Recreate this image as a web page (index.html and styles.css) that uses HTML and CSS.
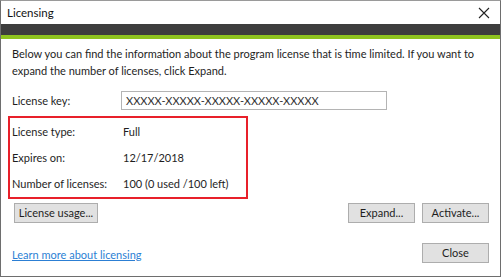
FILE: index.html
```html
<!DOCTYPE html>
<html>
<head>
<meta charset="utf-8">
<link rel="stylesheet" href="styles.css">
</head>
<body>
<div class="window">
  <div class="titlebar">
    <span class="title">Licensing</span>
    <svg class="close-x" width="12" height="12" viewBox="0 0 12 12"><path d="M1 1 L11 11 M11 1 L1 11" stroke="#222" stroke-width="1.1"/></svg>
  </div>
  <div class="darkbar"></div>
  <div class="greenbar"></div>
  <div class="content">
    <p class="intro">Below you can find the information about the program license that is time limited. If you want to<br>expand the number of licenses, click Expand.</p>
    <div class="row key-row">
      <span class="label key-label">License key:</span>
      <div class="keybox">XXXXX-XXXXX-XXXXX-XXXXX-XXXXX</div>
    </div>
    <div class="info-box">
      <div class="row"><span class="label">License type:</span><span>Full</span></div>
      <div class="row"><span class="label">Expires on:</span><span>12/17/2018</span></div>
      <div class="row"><span class="label">Number of licenses:</span><span>100 (0 used /100 left)</span></div>
    </div>
    <div class="buttons">
      <button class="btn usage">License usage...</button>
      <div class="spacer"></div>
      <button class="btn">Expand...</button>
      <button class="btn">Activate...</button>
    </div>
    <div class="footer">
      <a class="link" href="#">Learn more about licensing</a>
      <button class="btn">Close</button>
    </div>
  </div>
</div>
</body>
</html>
```
FILE: styles.css
```css
html, body {
  margin: 0;
  padding: 0;
  background: #ffffff;
}
body {
  font-family: "Lato", "Noto Sans", sans-serif;
  font-size: 11px;
  color: #1e1e1e;
}
.window {
  width: 501px;
  height: 277px;
  box-sizing: border-box;
  border: 1px solid #6e6e6e;
  border-top-color: #9a9a9a;
  display: flex;
  flex-direction: column;
  background: #fff;
}
.titlebar {
  height: 23px;
  display: flex;
  align-items: center;
  justify-content: space-between;
  padding: 0 10px 0 6px;
}
.title {
  font-size: 11.5px;
  color: #111;
}
.close-x {
  display: block;
}
.darkbar {
  height: 11px;
  background: #3d3d3d;
}
.greenbar {
  height: 4px;
  background: #8ec31f;
}
.content {
  padding: 0 11px 0 11px;
  display: flex;
  flex-direction: column;
  flex: 1;
}
.intro {
  margin: 0;
  padding-top: 6px;
  line-height: 17px;
  white-space: nowrap;
}
.row {
  display: flex;
  align-items: center;
}
.label {
  width: 111px;
  flex: none;
}
.key-label {
  width: 109px;
}
.key-row {
  margin-top: 12px;
  height: 19px;
}
.keybox {
  width: 260px;
  height: 17px;
  line-height: 17px;
  border: 1px solid #b4b4b4;
  padding-left: 4px;
  color: #333;
}
.info-box {
  margin: 6px 0 0 -4px;
  width: 234px;
  height: 79px;
  border: 2px solid #e8202a;
  padding: 0 0 0 2px;
  display: flex;
  flex-direction: column;
  justify-content: space-around;
}
.info-box .row {
  height: 27px;
}
.buttons {
  display: flex;
  margin-top: 4px;
  gap: 7px;
}
.spacer { flex: 1; }
.btn {
  font-family: inherit;
  font-size: 11px;
  color: #1e1e1e;
  background: #e1e1e1;
  border: 1px solid #adadad;
  height: 20px;
  min-width: 67px;
  padding: 0 6px;
  margin: 0;
  line-height: 16px;
  border-radius: 0;
}
.usage {
  margin-left: 2px;
  width: 84px;
  padding: 0 2px;
}
.footer {
  display: flex;
  justify-content: space-between;
  align-items: center;
  margin-top: 20px;
}
.link {
  color: #2c7fd4;
  text-decoration: underline;
  margin-top: 2px;
}
```
